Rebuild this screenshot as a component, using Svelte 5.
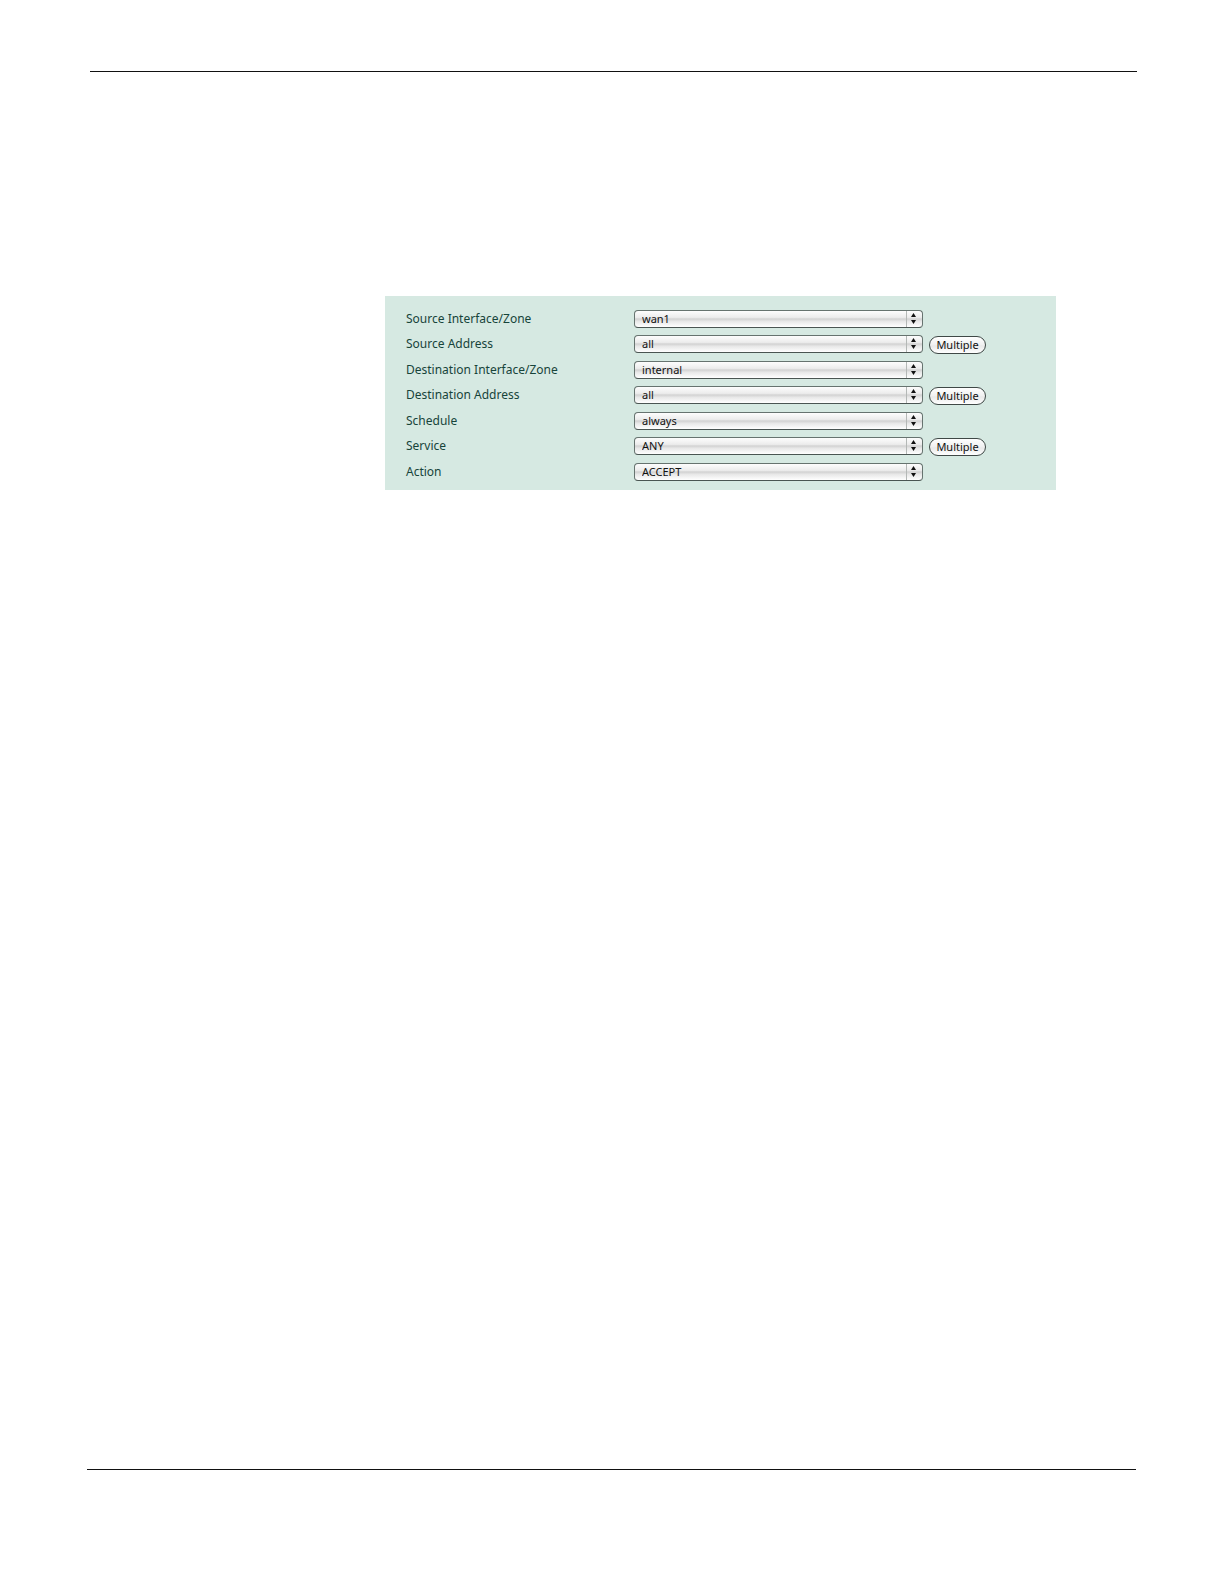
<script>
  const fields = [
    { id: 'srcintf', label: 'Source Interface/Zone', options: ['wan1', 'internal'], value: 'wan1' },
    { id: 'srcaddr', label: 'Source Address', options: ['all'], value: 'all', multiple: true },
    { id: 'dstintf', label: 'Destination Interface/Zone', options: ['internal', 'wan1'], value: 'internal' },
    { id: 'dstaddr', label: 'Destination Address', options: ['all'], value: 'all', multiple: true },
    { id: 'schedule', label: 'Schedule', options: ['always'], value: 'always' },
    { id: 'service', label: 'Service', options: ['ANY'], value: 'ANY', multiple: true },
    { id: 'action', label: 'Action', options: ['ACCEPT', 'DENY'], value: 'ACCEPT' },
  ]

  let policy = $state(Object.fromEntries(fields.map(f => [f.id, f.value])))
</script>

<div class="page">
  <hr class="rule top" />

  <form class="policy" onsubmit={(e) => e.preventDefault()}>
    {#each fields as field (field.id)}
      <div class="row">
        <label for={field.id}>{field.label}</label>
        <div class="popup">
          <select id={field.id} bind:value={policy[field.id]}>
            {#each field.options as option}
              <option value={option}>{option}</option>
            {/each}
          </select>
          <svg class="arrows" viewBox="0 0 16 16" aria-hidden="true">
            <path d="M0.5 0V16" stroke="#b4b8b6" />
            <path d="M7.5 2L10 6H5zM7.5 13L10 9H5z" fill="#111" />
          </svg>
        </div>
        {#if field.multiple}
          <button type="button">Multiple</button>
        {/if}
      </div>
    {/each}
  </form>

  <hr class="rule bottom" />
</div>

<style>
  :global(body) {
    margin: 0;
    background: #fff;
  }

  .page {
    box-sizing: border-box;
    min-height: 100vh;
    padding: 71px 87px 114px;
    display: flex;
    flex-direction: column;
  }

  .rule {
    width: auto;
    height: 1px;
    margin: 0;
    border: none;
    background: #111;
  }
  .rule.top {
    margin-left: 3px;
  }
  .rule.bottom {
    margin-top: auto;
    margin-right: 1px;
  }

  .policy {
    margin: 224px 81px 0 298px;
    padding: 14px 21px 2px;
    display: grid;
    grid-auto-rows: 25px 26px;
    background: #d6e9e2;
  }

  .row {
    display: grid;
    grid-template-columns: 228px 289px auto;
    align-items: start;
    justify-content: start;
  }

  label {
    font: 12px/18px "Noto Sans", Verdana, sans-serif;
    color: #17443a;
  }

  .popup {
    position: relative;
    height: 18px;
  }

  select {
    appearance: none;
    box-sizing: border-box;
    display: block;
    width: 100%;
    height: 18px;
    margin: 0;
    padding: 0 24px 0 7px;
    border: 1px solid #66736f;
    border-bottom-color: #4a5552;
    border-radius: 4px;
    background: linear-gradient(#fdfdfd, #ececec 40%, #d2d2d2 50%, #e8e8e8 65%, #fff);
    font: 11px/16px "Noto Sans", "Lucida Grande", sans-serif;
    color: #111;
  }

  .arrows {
    position: absolute;
    top: 1px;
    right: 1px;
    width: 16px;
    height: 16px;
    pointer-events: none;
  }

  button {
    box-sizing: border-box;
    width: 57px;
    height: 18px;
    margin: 1px 0 0 6px;
    padding: 0;
    border: 1px solid #3f4846;
    border-radius: 9px;
    background: linear-gradient(#fff, #f0f0f0 50%, #e9e9e9 55%, #fff);
    font: 11px/16px "Noto Sans", "Lucida Grande", sans-serif;
    color: #111;
  }
</style>
